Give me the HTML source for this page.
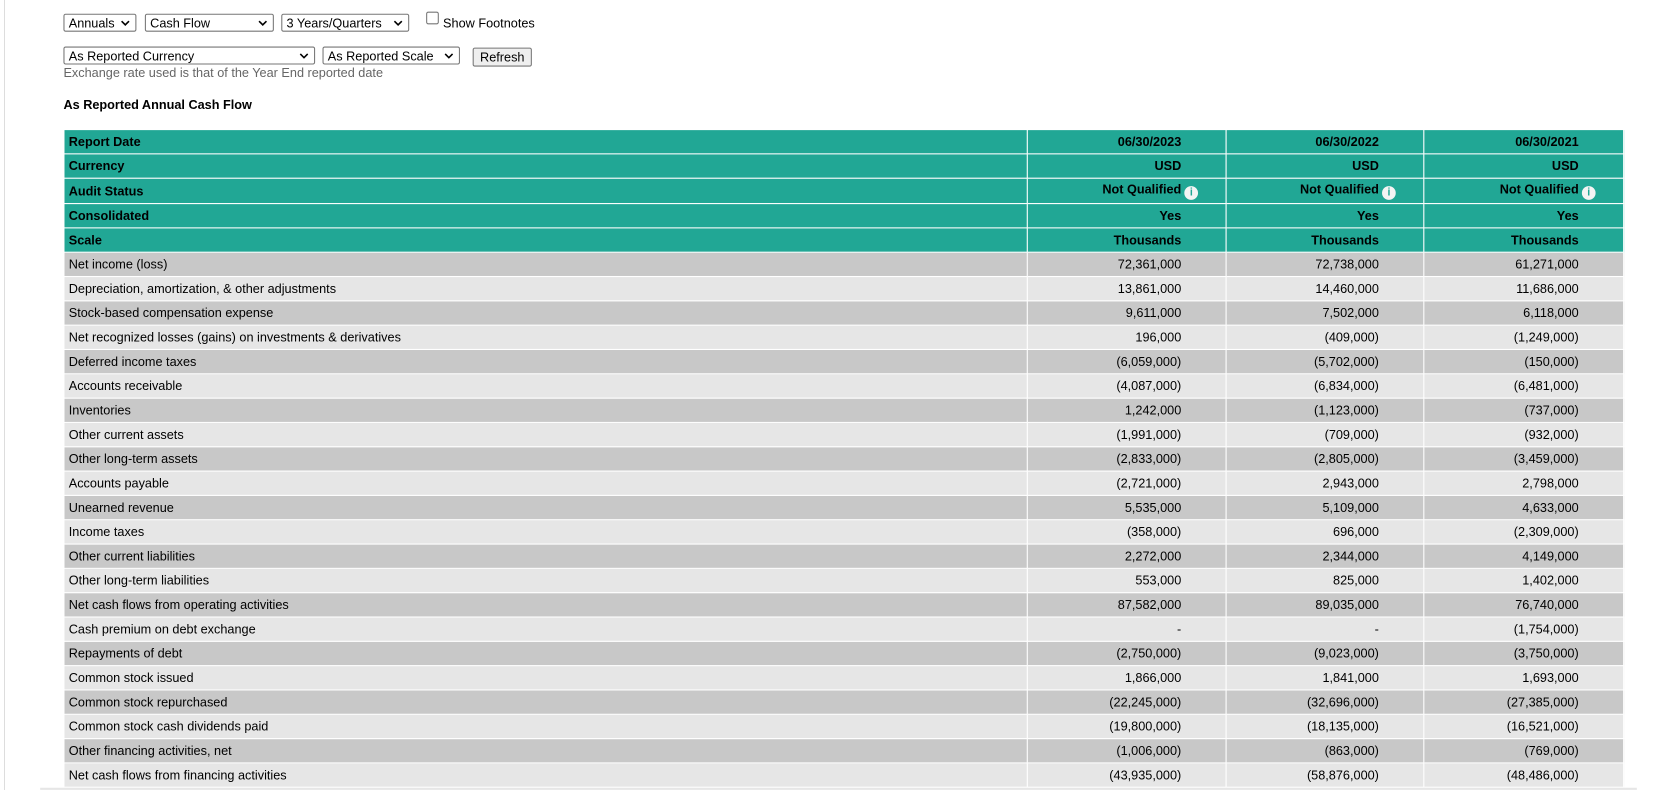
<!DOCTYPE html>
<html><head><meta charset="utf-8"><style>
body{margin:0;background:#fff;font-family:"Liberation Sans",Arial,sans-serif;font-size:12px;color:#000;width:1658px;height:790px;overflow:hidden;position:relative}
#w{position:absolute;left:0;top:0;width:1568px;height:747px;transform:scale(1.0574);transform-origin:0 0}
.vl{position:absolute;left:4px;top:0;width:1px;height:790px;background:#ddd}
.bl{position:absolute;left:38px;top:745px;width:1510px;height:2px;background:#e6e6e6}
.sel{position:absolute;height:17px;border:1px solid #767676;border-radius:2px;background:#fff;font-size:12px;line-height:16px;padding-left:4px;box-sizing:border-box}
.sel svg{position:absolute;right:5px;top:5px}
.btn{position:absolute;left:447px;top:45px;width:56px;height:18px;border:1px solid #767676;border-radius:2px;background:#efefef;text-align:center;line-height:16px;box-sizing:border-box}
table{position:absolute;left:60px;top:122px;width:1476px;border-collapse:collapse}
td{padding:0 4px;height:23px;border:1px solid #fff;box-sizing:border-box;white-space:nowrap}
td.n{text-align:right;padding-right:42px}
tr.h td{background:#21a795;font-weight:bold}
tr.a td{background:#c8c8c8}
tr.b td{background:#e6e6e6}
.i{display:inline-block;width:13px;height:13px;border-radius:50%;background:#f4f4f4;color:#21a795;font-size:10px;line-height:13px;text-align:center;vertical-align:-2px;margin-left:3px;font-weight:bold}
</style></head><body>
<div class="vl"></div>
<div id="w">
<div class="sel" style="left:60px;top:13px;width:69px">Annuals<svg width="9" height="6"><path d="M1 1l3.5 3.5L8 1" stroke="#000" stroke-width="1.5" fill="none"/></svg></div>
<div class="sel" style="left:137px;top:13px;width:122px">Cash Flow<svg width="9" height="6"><path d="M1 1l3.5 3.5L8 1" stroke="#000" stroke-width="1.5" fill="none"/></svg></div>
<div class="sel" style="left:266px;top:13px;width:121px">3 Years/Quarters<svg width="9" height="6"><path d="M1 1l3.5 3.5L8 1" stroke="#000" stroke-width="1.5" fill="none"/></svg></div>
<div style="position:absolute;left:403px;top:11px;width:12px;height:12px;border:1px solid #767676;border-radius:2px;box-sizing:border-box"></div>
<div style="position:absolute;left:419px;top:15px">Show Footnotes</div>
<div class="sel" style="left:60px;top:44px;width:238px">As Reported Currency<svg width="9" height="6"><path d="M1 1l3.5 3.5L8 1" stroke="#000" stroke-width="1.5" fill="none"/></svg></div>
<div class="sel" style="left:305px;top:44px;width:130px">As Reported Scale<svg width="9" height="6"><path d="M1 1l3.5 3.5L8 1" stroke="#000" stroke-width="1.5" fill="none"/></svg></div>
<div class="btn">Refresh</div>
<div style="position:absolute;left:60px;top:62px;color:#666">Exchange rate used is that of the Year End reported date</div>
<div style="position:absolute;left:60px;top:92px;font-weight:bold">As Reported Annual Cash Flow</div>
<table>
<colgroup><col style="width:912px"><col style="width:188px"><col style="width:187px"><col style="width:189px"></colgroup>
<tr class="h"><td>Report Date</td><td class="n">06/30/2023</td><td class="n">06/30/2022</td><td class="n">06/30/2021</td></tr>
<tr class="h"><td>Currency</td><td class="n">USD</td><td class="n">USD</td><td class="n">USD</td></tr>
<tr class="h" style="height:24px"><td style="height:24px">Audit Status</td><td class="n" style="padding-right:26px">Not Qualified<span class="i">i</span></td><td class="n" style="padding-right:26px">Not Qualified<span class="i">i</span></td><td class="n" style="padding-right:26px">Not Qualified<span class="i">i</span></td></tr>
<tr class="h"><td>Consolidated</td><td class="n">Yes</td><td class="n">Yes</td><td class="n">Yes</td></tr>
<tr class="h"><td>Scale</td><td class="n">Thousands</td><td class="n">Thousands</td><td class="n">Thousands</td></tr>
<tr class="a"><td>Net income (loss)</td><td class="n">72,361,000</td><td class="n">72,738,000</td><td class="n">61,271,000</td></tr>
<tr class="b"><td>Depreciation, amortization, &amp; other adjustments</td><td class="n">13,861,000</td><td class="n">14,460,000</td><td class="n">11,686,000</td></tr>
<tr class="a"><td>Stock-based compensation expense</td><td class="n">9,611,000</td><td class="n">7,502,000</td><td class="n">6,118,000</td></tr>
<tr class="b"><td>Net recognized losses (gains) on investments &amp; derivatives</td><td class="n">196,000</td><td class="n">(409,000)</td><td class="n">(1,249,000)</td></tr>
<tr class="a"><td>Deferred income taxes</td><td class="n">(6,059,000)</td><td class="n">(5,702,000)</td><td class="n">(150,000)</td></tr>
<tr class="b"><td>Accounts receivable</td><td class="n">(4,087,000)</td><td class="n">(6,834,000)</td><td class="n">(6,481,000)</td></tr>
<tr class="a"><td>Inventories</td><td class="n">1,242,000</td><td class="n">(1,123,000)</td><td class="n">(737,000)</td></tr>
<tr class="b"><td>Other current assets</td><td class="n">(1,991,000)</td><td class="n">(709,000)</td><td class="n">(932,000)</td></tr>
<tr class="a"><td>Other long-term assets</td><td class="n">(2,833,000)</td><td class="n">(2,805,000)</td><td class="n">(3,459,000)</td></tr>
<tr class="b"><td>Accounts payable</td><td class="n">(2,721,000)</td><td class="n">2,943,000</td><td class="n">2,798,000</td></tr>
<tr class="a"><td>Unearned revenue</td><td class="n">5,535,000</td><td class="n">5,109,000</td><td class="n">4,633,000</td></tr>
<tr class="b"><td>Income taxes</td><td class="n">(358,000)</td><td class="n">696,000</td><td class="n">(2,309,000)</td></tr>
<tr class="a"><td>Other current liabilities</td><td class="n">2,272,000</td><td class="n">2,344,000</td><td class="n">4,149,000</td></tr>
<tr class="b"><td>Other long-term liabilities</td><td class="n">553,000</td><td class="n">825,000</td><td class="n">1,402,000</td></tr>
<tr class="a"><td>Net cash flows from operating activities</td><td class="n">87,582,000</td><td class="n">89,035,000</td><td class="n">76,740,000</td></tr>
<tr class="b"><td>Cash premium on debt exchange</td><td class="n">-</td><td class="n">-</td><td class="n">(1,754,000)</td></tr>
<tr class="a"><td>Repayments of debt</td><td class="n">(2,750,000)</td><td class="n">(9,023,000)</td><td class="n">(3,750,000)</td></tr>
<tr class="b"><td>Common stock issued</td><td class="n">1,866,000</td><td class="n">1,841,000</td><td class="n">1,693,000</td></tr>
<tr class="a"><td>Common stock repurchased</td><td class="n">(22,245,000)</td><td class="n">(32,696,000)</td><td class="n">(27,385,000)</td></tr>
<tr class="b"><td>Common stock cash dividends paid</td><td class="n">(19,800,000)</td><td class="n">(18,135,000)</td><td class="n">(16,521,000)</td></tr>
<tr class="a"><td>Other financing activities, net</td><td class="n">(1,006,000)</td><td class="n">(863,000)</td><td class="n">(769,000)</td></tr>
<tr class="b"><td>Net cash flows from financing activities</td><td class="n">(43,935,000)</td><td class="n">(58,876,000)</td><td class="n">(48,486,000)</td></tr>
</table>
<div class="bl"></div>
</div>
</body></html>
